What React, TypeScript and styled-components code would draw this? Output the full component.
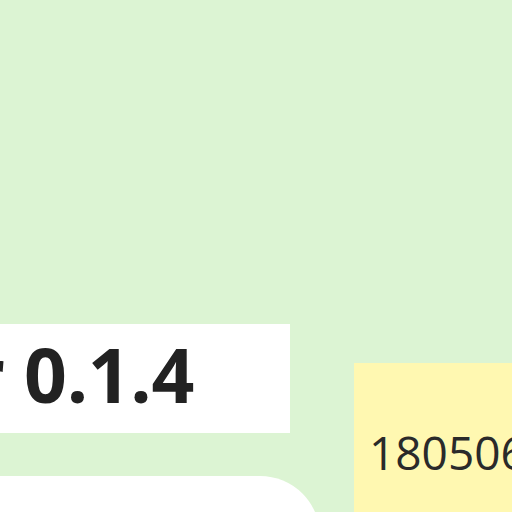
import React from "react";
import styled, { createGlobalStyle } from "styled-components";

const Global = createGlobalStyle`
  html, body { margin: 0; padding: 0; }
  body { background: #dcf4d3; font-family: "Open Sans", "Noto Sans", sans-serif; }
`;

const Page = styled.div`
  width: 512px;
  height: 512px;
  overflow: hidden;
  background: #dcf4d3;
  display: flex;
  flex-direction: row;
  align-items: flex-start;
  padding-top: 324px;
  box-sizing: border-box;
`;

const LeftColumn = styled.div`
  width: 320px;
  flex: none;
  display: flex;
  flex-direction: column;
  gap: 43px;
`;

const VersionLabel = styled.div`
  width: 290px;
  height: 109px;
  background: #ffffff;
  display: flex;
  align-items: center;
  justify-content: flex-end;
  padding: 0 96px 8px 0;
  box-sizing: border-box;
  overflow: hidden;
`;

const VersionText = styled.span`
  flex: none;
  white-space: nowrap;
  font-family: "Open Sans", sans-serif;
  font-weight: 700;
  font-size: 75px;
  letter-spacing: -0.3px;
  line-height: 1;
  color: #222222;
`;

const Card = styled.div`
  width: 320px;
  height: 120px;
  background: #ffffff;
  border-top-right-radius: 60px;
`;

const NoteCard = styled.div`
  margin-left: 34px;
  margin-top: 39px;
  width: 240px;
  height: 200px;
  flex: none;
  background: #fff8b1;
  padding: 66px 0 0 15px;
  box-sizing: border-box;
  overflow: hidden;
`;

const NoteText = styled.div`
  white-space: nowrap;
  font-family: "Open Sans", sans-serif;
  font-weight: 400;
  font-size: 46px;
  line-height: 1;
  color: #2a2a2a;
`;

export default function App() {
  return (
    <>
      <Global />
      <Page>
        <LeftColumn>
          <VersionLabel>
            <VersionText>Viewer 0.1.4</VersionText>
          </VersionLabel>
          <Card />
        </LeftColumn>
        <NoteCard>
          <NoteText>18050612</NoteText>
        </NoteCard>
      </Page>
    </>
  );
}
